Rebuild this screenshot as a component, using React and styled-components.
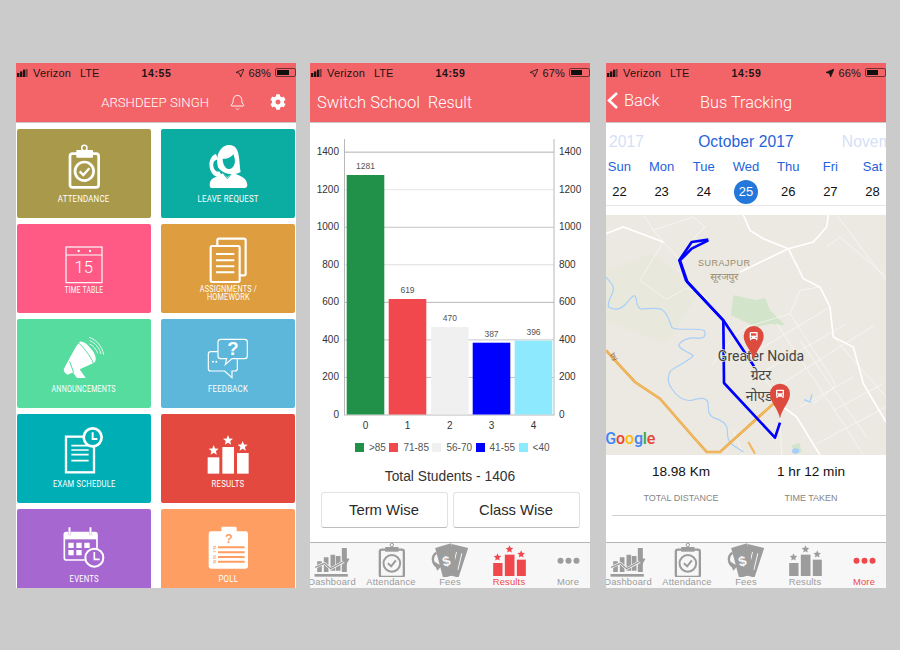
import React from 'react';
import styled, { createGlobalStyle } from 'styled-components';
import { Bell } from 'lucide-react';
import { FaCog } from 'react-icons/fa';

const HEADER = '#f36468';
const ACTIVE = '#f0474c';
const BLUE = '#2563d9';

const GlobalStyle = createGlobalStyle`
  html, body { margin: 0; background: #cbcbcb; }
  body { font-family: "Liberation Sans", Arial, sans-serif; }
`;

const Page = styled.div`
  width: 900px;
  height: 650px;
  box-sizing: border-box;
  padding: 63px 0 0 16px;
  display: flex;
  gap: 14px;
  overflow: hidden;
`;

const Phone = styled.div`
  width: 280px;
  height: 525px;
  margin-left: ${(p) => p.$shift || 0}px;
  background: #fff;
  display: flex;
  flex-direction: column;
  overflow: hidden;
`;

const TopBar = styled.div`
  flex: 0 0 59px;
  background: ${HEADER};
  border-bottom: 1px solid #c9c9c9;
  display: flex;
  flex-direction: column;
`;

const Status = styled.div`
  height: 19px;
  display: grid;
  grid-template-columns: 1fr auto 1fr;
  align-items: center;
  padding-left: 1px;
  font-size: 11px;
  color: #1d1416;
`;

const StatusLeft = styled.div`
  display: flex;
  align-items: center;
`;

const Carrier = styled.span`
  margin-left: 5px;
  width: 47px;
  letter-spacing: 0.2px;
`;

const StatusTime = styled.span`
  font-weight: bold;
  letter-spacing: 0.6px;
  font-size: 10.5px;
`;

const StatusRight = styled.div`
  display: flex;
  align-items: center;
  justify-content: flex-end;
  gap: 4px;
  letter-spacing: 0.2px;
`;

const Battery = styled.span`
  width: 21px;
  height: 9px;
  box-sizing: border-box;
  border: 1px solid #6d3033;
  border-radius: 2px;
  padding: 1px;
  display: flex;
  &::before {
    content: '';
    display: block;
    width: ${(p) => p.$level}%;
    background: #111;
  }
`;

const Nav = styled.div`
  flex: 1;
  display: flex;
  align-items: center;
  color: #fff;
  font-family: Roboto, "Liberation Sans", sans-serif;
  font-weight: 300;
`;

const HomeNav = styled(Nav)`
  justify-content: flex-end;
  padding-right: 10px;
  font-size: 13.2px;
`;

const NavName = styled.span`
  margin-right: 20px;
`;

const BellIcon = styled(Bell)`
  margin-right: 24px;
  stroke-width: 1.3;
`;

const TitleNav = styled(Nav)`
  padding-left: 7px;
  font-size: 16.6px;
`;

const SubTitle = styled.span`
  margin-left: 8px;
  font-size: 16px;
`;

const BackNav = styled(Nav)`
  position: relative;
  justify-content: center;
  font-size: 16.3px;
`;

const BackLink = styled.span`
  position: absolute;
  left: 1px;
  top: 9px;
  display: flex;
  align-items: center;
  gap: 6px;
  font-size: 16.5px;
`;

const Tiles = styled.div`
  flex: 1;
  display: grid;
  grid-template-columns: 134px 134px;
  grid-auto-rows: 89px;
  gap: 6px 10px;
  padding: 6px 1px 0;
  overflow: hidden;
`;

const Tile = styled.div`
  background: ${(p) => p.$color};
  border-radius: 2px;
  display: flex;
  flex-direction: column;
  align-items: center;
  color: #fff;
  --tile: ${(p) => p.$color};
`;

const TileIcon = styled.div`
  height: 60px;
  display: flex;
  align-items: flex-end;
`;

const TileLabel = styled.div`
  margin-top: ${(p) => p.$lift || 6}px;
  font-family: Roboto, sans-serif;
  font-size: 9px;
  line-height: 8px;
  height: 10px;
  text-align: center;
  letter-spacing: 0.25px;
  white-space: nowrap;
  transform: scaleX(${(p) => p.$squeeze || 0.87});
`;

const Tabs = styled.div`
  flex: 0 0 45px;
  background: #f7f7f7;
  border-top: 1px solid #b4b4b4;
  display: flex;
  justify-content: center;
`;

const Tab = styled.div`
  flex: 0 0 59px;
  display: flex;
  flex-direction: column;
  align-items: center;
  color: ${(p) => (p.$active ? ACTIVE : '#9c9c9c')};
  svg { display: block; }
`;

const TabLabel = styled.span`
  font-size: 9.4px;
  line-height: 10px;
  letter-spacing: 0.2px;
`;

const ChartWrap = styled.svg`
  display: block;
  margin-top: 16px;
  flex: 0 0 auto;
`;

const Legend = styled.div`
  display: flex;
  align-items: center;
  justify-content: center;
  height: 12px;
  margin: 6px 0 0 8px;
  font-size: 10px;
  color: #555;
`;

const LegendItem = styled.span`
  display: flex;
  align-items: center;
  margin-right: 3.5px;
  &::before {
    content: '';
    width: 9px;
    height: 9px;
    margin-right: 5px;
    background: ${(p) => p.$color};
  }
`;

const Total = styled.div`
  margin-top: 15px;
  text-align: center;
  font-size: 13.8px;
  line-height: 18px;
  color: #333;
`;

const ButtonRow = styled.div`
  display: flex;
  justify-content: center;
  gap: 5px;
  margin-top: 6px;
`;

const WiseButton = styled.div`
  width: 127px;
  height: 36px;
  box-sizing: border-box;
  border: 1px solid #e2e2e2;
  border-bottom-color: #bdbdbd;
  border-radius: 3px;
  display: flex;
  align-items: center;
  justify-content: center;
  font-size: 14.8px;
  color: #2a2a2a;
`;

const Spacer = styled.div`
  flex: 1;
`;

const Months = styled.div`
  height: 34px;
  padding-top: 3px;
  margin: 0 -1px;
  box-sizing: border-box;
  display: grid;
  grid-template-columns: minmax(0, 1fr) auto minmax(0, 1fr);
  align-items: center;
  font-size: 15.6px;
  letter-spacing: 0.1px;
  white-space: nowrap;
  color: #d5e0f8;
`;

const MonthSide = styled.div`
  display: flex;
  justify-content: ${(p) => (p.$left ? 'flex-end' : 'flex-start')};
  margin: ${(p) => (p.$left ? '0 54px 0 0' : '0 0 0 48px')};
  overflow: hidden;
`;

const MonthLabel = styled.span`
  flex-shrink: 0;
`;

const MonthCurrent = styled.span`
  color: ${BLUE};
`;

const Week = styled.div`
  display: flex;
  justify-content: center;
  overflow: hidden;
`;

const Cell = styled.div`
  flex: 0 0 42.2px;
  display: flex;
  justify-content: center;
  align-items: center;
`;

const DayNames = styled(Week)`
  height: 18px;
  font-size: 13px;
  color: ${BLUE};
`;

const Dates = styled(Week)`
  height: 27px;
  margin-top: 3px;
  border-bottom: 1px solid #e6e6e6;
  font-size: 13px;
  color: #111;
`;

const DateNum = styled.span`
  width: 24px;
  height: 24px;
  border-radius: 50%;
  display: flex;
  align-items: center;
  justify-content: center;
  background: ${(p) => (p.$today ? '#2478dc' : 'transparent')};
  color: ${(p) => (p.$today ? '#fff' : 'inherit')};
`;

const MapBox = styled.svg`
  display: block;
  margin-top: 9px;
  flex: 0 0 auto;
`;

const Stats = styled.div`
  display: grid;
  grid-template-columns: 150px 110px;
  padding-top: 9px;
`;

const Stat = styled.div`
  text-align: center;
`;

const StatValue = styled.div`
  font-size: 13.6px;
  line-height: 16px;
  color: #111;
`;

const StatLabel = styled.div`
  margin-top: 12px;
  font-size: 9px;
  line-height: 12px;
  color: #858585;
`;

const Divider = styled.div`
  height: 1px;
  margin: 11px 0 0 6px;
  background: #d0d0d0;
`;

function Signal() {
  return (
    <svg width="11" height="8" viewBox="0 0 11 8">
      <rect x="0" y="4" width="2.4" height="4" fill="#1d1416" />
      <rect x="3" y="2.4" width="2.4" height="5.6" fill="#1d1416" />
      <rect x="6" y="0.6" width="2.4" height="7.4" fill="#1d1416" />
      <rect x="9" y="0" width="1.6" height="8" fill="#7c3a3c" />
    </svg>
  );
}

function StatusBar({ time, level, solid }) {
  return (
    <Status>
      <StatusLeft>
        <Signal />
        <Carrier>Verizon</Carrier>
        <span>LTE</span>
      </StatusLeft>
      <StatusTime>{time}</StatusTime>
      <StatusRight>
        <svg width="8" height="8" viewBox="0 0 8 8">
          <path
            d="M8 0 L0 3.4 L3.6 4.4 L4.6 8 Z"
            fill={solid ? '#1d1416' : 'none'}
            stroke="#1d1416"
            strokeWidth="0.8"
          />
        </svg>
        <span>{level}%</span>
        <Battery $level={level} />
      </StatusRight>
    </Status>
  );
}

// Tile icons use the zoomed coordinates of the artwork, so each viewBox is 3x its size
const Ic = ({ box, children }) => {
  const [, , w, h] = box.split(' ').map(Number);
  return (
    <svg width={w / 3} height={h / 3} viewBox={box}>
      {children}
    </svg>
  );
};

const star = (cx, cy, r) => {
  const pts = [];
  for (let i = 0; i < 10; i++) {
    const a = (Math.PI / 5) * i - Math.PI / 2;
    const rr = i % 2 ? r * 0.45 : r;
    pts.push(`${(cx + rr * Math.cos(a)).toFixed(1)},${(cy + rr * Math.sin(a)).toFixed(1)}`);
  }
  return pts.join(' ');
};

const AttendanceIcon = () => (
  <Ic box="172 254 98 134">
    <rect x="178" y="283" width="86" height="101" rx="8" fill="none" stroke="#fff" strokeWidth="8" />
    <rect x="197" y="272" width="50" height="23" rx="2" fill="#fff" />
    <circle cx="221" cy="266" r="8" fill="none" stroke="#fff" strokeWidth="4.5" />
    <circle cx="221" cy="336" r="28" fill="none" stroke="#fff" strokeWidth="8" />
    <path d="M207 336 L218 347 L236 327" fill="none" stroke="#fff" strokeWidth="7" />
  </Ic>
);

const LadyIcon = () => (
  <Ic box="592 252 122 134">
    <path
      d="M622 322 C612 276 636 255 656 255 C690 256 684 300 690 336 C668 348 638 344 622 322 Z"
      fill="#fff"
    />
    <path d="M636 296 C650 298 664 290 668 282 C674 298 676 312 664 324 C652 334 636 320 636 296 Z" fill="var(--tile)" />
    <path
      d="M597 374 C597 352 620 352 636 340 L650 352 L666 338 C690 348 710 354 710 376 C710 381 706 384 702 384 L604 384 C600 384 597 381 597 374 Z"
      fill="#fff"
    />
    <path
      d="M616 282 C596 288 590 318 604 340 C612 352 626 352 634 348 L626 334 C618 338 610 330 608 318 C606 306 612 300 622 298 Z"
      fill="#fff"
    />
    <path d="M640 344 L650 356 L662 342" fill="none" stroke="var(--tile)" strokeWidth="2.5" />
  </Ic>
);

const CalendarIcon = () => (
  <Ic box="162 548 114 114">
    <rect x="165" y="551" width="108" height="107" fill="none" stroke="#fff" strokeWidth="3.5" />
    <line x1="165" y1="575" x2="273" y2="575" stroke="#fff" strokeWidth="3" />
    <circle cx="203" cy="563" r="3.5" fill="#fff" />
    <circle cx="237" cy="563" r="3.5" fill="#fff" />
    <text x="218" y="629" textAnchor="middle" fontSize="50" fill="#fff" fontFamily="Roboto" fontWeight="300">
      15
    </text>
  </Ic>
);

const DocsIcon = () => (
  <Ic box="590 530 114 140">
    <rect x="615" y="535" width="85" height="110" rx="5" fill="none" stroke="#fff" strokeWidth="6.5" />
    <rect x="595" y="557" width="87" height="108" rx="5" fill="var(--tile)" stroke="#fff" strokeWidth="6.5" />
    <path d="M611 581 H666 M611 600 H666 M611 618 H666 M611 636 H666" stroke="#fff" strokeWidth="6" />
  </Ic>
);

const MegaphoneIcon = () => (
  <Ic box="158 46 126 130">
    <path d="M208 64 C196 76 190 92 178 112 L160 146 C160 154 166 160 172 162 L248 128 C262 124 258 100 240 82 C226 66 214 60 208 64 Z" fill="#fff" />
    <path d="M184 150 L200 172 L226 172 L204 140 Z" fill="#fff" />
    <path d="M178 122 L190 156 M204 66 C216 76 240 104 250 130" fill="none" stroke="var(--tile)" strokeWidth="3" />
    <path d="M236 50 C258 56 276 78 280 102 M238 60 C254 66 268 82 272 100 M238 70 C250 76 258 86 262 98" fill="none" stroke="#fff" strokeWidth="2.5" />
  </Ic>
);

const ChatIcon = () => (
  <Ic box="589 56 125 122">
    <path
      d="M630 60 H702 Q710 60 710 68 V110 Q710 118 702 118 H664 L644 136 L648 118 H630 Q622 118 622 110 V68 Q622 60 630 60 Z"
      fill="none"
      stroke="#fff"
      strokeWidth="3.5"
    />
    <path
      d="M622 97 H600 Q593 97 593 104 V148 Q593 155 600 155 H642 L664 175 L664 155 H672 Q680 155 680 148 V120"
      fill="none"
      stroke="#fff"
      strokeWidth="3.5"
    />
    <text x="667" y="108" textAnchor="middle" fontSize="56" fontWeight="bold" fill="#fff" fontFamily="Liberation Sans">
      ?
    </text>
    <circle cx="607" cy="127" r="3" fill="#fff" />
    <circle cx="617" cy="127" r="3" fill="#fff" />
  </Ic>
);

const ExamIcon = () => (
  <Ic box="168 322 118 140">
    <rect x="174" y="351" width="84" height="107" fill="none" stroke="#fff" strokeWidth="7" />
    <path d="M190 378 H242 M190 391 H242 M190 405 H242 M190 423 H242" stroke="#fff" strokeWidth="5" />
    <circle cx="254" cy="353" r="27" fill="var(--tile)" stroke="#fff" strokeWidth="8" />
    <path d="M254 338 V358 H268" fill="none" stroke="#fff" strokeWidth="6" />
  </Ic>
);

const ResultsIcon = () => (
  <Ic box="588 346 128 118">
    <rect x="590" y="413" width="35" height="49" fill="#fff" />
    <rect x="634" y="382" width="35" height="80" fill="#fff" />
    <rect x="678" y="400" width="35" height="62" fill="#fff" />
    <polygon points={star(608, 392, 16)} fill="#fff" />
    <polygon points={star(651, 362, 16)} fill="#fff" />
    <polygon points={star(695, 380, 16)} fill="#fff" />
  </Ic>
);

const EventsIcon = () => (
  <Ic box="158 620 128 128">
    <rect x="162" y="640" width="98" height="82" rx="6" fill="none" stroke="#fff" strokeWidth="5" />
    <rect x="162" y="640" width="98" height="20" fill="#fff" />
    <rect x="174" y="623" width="7" height="24" rx="3" fill="#fff" stroke="var(--tile)" strokeWidth="1" />
    <rect x="237" y="623" width="7" height="24" rx="3" fill="#fff" stroke="var(--tile)" strokeWidth="1" />
    <path d="M174 670 h16 v16 h-16 z M198 670 h16 v16 h-16 z M222 670 h16 v16 h-16 z M174 692 h16 v16 h-16 z M198 692 h16 v16 h-16 z" fill="#fff" />
    <circle cx="252" cy="715" r="27" fill="var(--tile)" stroke="#fff" strokeWidth="6" />
    <path d="M252 698 V720 H268" fill="none" stroke="#fff" strokeWidth="5" />
  </Ic>
);

const PollIcon = () => (
  <Ic box="590 618 122 130">
    <rect x="592" y="634" width="118" height="112" rx="7" fill="#fff" />
    <rect x="630" y="620" width="46" height="22" rx="4" fill="#fff" />
    <text x="653" y="669" textAnchor="middle" fontSize="38" fontWeight="bold" fill="var(--tile)" fontFamily="Liberation Sans">
      ?
    </text>
    <path d="M620 682 H700 M620 697 H700 M620 711 H700 M620 725 H700" stroke="var(--tile)" strokeWidth="6" />
    <path d="M605 679 h9 l-9 7 h9 M605 694 h9 M605 708 h9 l-9 7 h9 M605 722 h9 l-9 6 h9" fill="none" stroke="var(--tile)" strokeWidth="2" />
  </Ic>
);

const TILES = [
  { label: 'ATTENDANCE', color: '#a99a4b', icon: <AttendanceIcon /> },
  { label: 'LEAVE REQUEST', color: '#0bada3', icon: <LadyIcon /> },
  { label: 'TIME TABLE', color: '#fe5a85', icon: <CalendarIcon />, lift: 2, squeeze: 0.75 },
  { label: <>ASSIGNMENTS /<br />HOMEWORK</>, color: '#de9d3e', icon: <DocsIcon />, lift: 1, squeeze: 0.81 },
  { label: 'ANNOUNCEMENTS', color: '#57dca0', icon: <MegaphoneIcon />, squeeze: 0.79 },
  { label: 'FEEDBACK', color: '#5cb7da', icon: <ChatIcon /> },
  { label: 'EXAM SCHEDULE', color: '#00aeb5', icon: <ExamIcon />, squeeze: 0.84 },
  { label: 'RESULTS', color: '#e3493e', icon: <ResultsIcon /> },
  { label: 'EVENTS', color: '#a667d1', icon: <EventsIcon />, squeeze: 0.85 },
  { label: 'POLL', color: '#fe9e63', icon: <PollIcon /> },
];

// Tab icons: zoomed coordinates too, one 59x34 cell per tab
const TabIc = ({ cx, children }) => (
  <svg width="59" height="34" viewBox={`${cx - 88.5} 653 177 102`} fill="currentColor">
    {children}
  </svg>
);

const DashIcon = () => (
  <TabIc cx={82}>
    <path d="M36 708 h14 v32 h-14 z M56 696 h14 v44 h-14 z M76 688 h14 v48 h-14 z M110 668 h15 v72 h-15 z M92 692 h14 v44 h-14 z" />
    <path d="M30 726 L58 714 L76 730 L126 704" fill="none" stroke="#f7f7f7" strokeWidth="8" />
    <path d="M30 726 L58 714 L76 730 L124 704" fill="none" stroke="currentColor" strokeWidth="4" />
    <path d="M110 698 L133 700 L122 720 Z" />
    <rect x="28" y="746" width="100" height="8" />
  </TabIc>
);

const ClipIcon = () => (
  <TabIc cx={257}>
    <rect x="222" y="673" width="72" height="82" rx="6" fill="none" stroke="currentColor" strokeWidth="7" />
    <rect x="238" y="665" width="40" height="14" />
    <circle cx="258" cy="659" r="5" fill="none" stroke="currentColor" strokeWidth="3" />
    <circle cx="258" cy="714" r="25" fill="none" stroke="currentColor" strokeWidth="6" />
    <path d="M246 714 L256 723 L270 705" fill="none" stroke="currentColor" strokeWidth="6" />
  </TabIc>
);

const FeesIcon = () => (
  <TabIc cx={434}>
    <polygon points="438,656 487,668 458,757 428,748" />
    <path d="M452 680 L440 730 M468 684 L456 734" stroke="#f7f7f7" strokeWidth="3" />
    <polygon points="388,668 436,654 458,745 412,758" />
    <text x="422" y="722" textAnchor="middle" fontSize="42" fontWeight="bold" fill="#f7f7f7" fontFamily="Liberation Sans" transform="rotate(-14 422 708)">
      $
    </text>
    <path d="M392 682 C376 692 378 716 396 726" fill="none" stroke="currentColor" strokeWidth="7" />
    <path d="M384 708 L408 722 L394 736 Z" />
  </TabIc>
);

const ResultTabIcon = () => (
  <TabIc cx={611}>
    <rect x="562" y="713" width="28" height="39" />
    <rect x="597" y="688" width="29" height="64" />
    <rect x="633" y="703" width="27" height="49" />
    <polygon points={star(575, 696, 12)} />
    <polygon points={star(611, 672, 12)} />
    <polygon points={star(646, 687, 12)} />
  </TabIc>
);

const MoreIcon = () => (
  <TabIc cx={788}>
    <circle cx="764" cy="706" r="9" />
    <circle cx="788" cy="706" r="9" />
    <circle cx="812" cy="706" r="9" />
  </TabIc>
);

function TabBar({ active }) {
  const tabs = [
    ['Dashboard', <DashIcon />],
    ['Attendance', <ClipIcon />],
    ['Fees', <FeesIcon />],
    ['Results', <ResultTabIcon />],
    ['More', <MoreIcon />],
  ];
  return (
    <Tabs>
      {tabs.map(([name, icon]) => (
        <Tab key={name} $active={name === active}>
          {icon}
          <TabLabel>{name}</TabLabel>
        </Tab>
      ))}
    </Tabs>
  );
}

const BARS = [
  { v: 1281, top: 36, x: 36.7, color: '#219049' },
  { v: 619, top: 160, x: 78.7, color: '#f0484c' },
  { v: 470, top: 188, x: 121, color: '#f0f0f0' },
  { v: 387, top: 203.7, x: 162.7, color: '#0000ff' },
  { v: 396, top: 201.7, x: 204.7, color: '#8de9fe' },
];
const GRID = ['#b0b0b0', '#e4e4e4', '#c4c4c4', '#dcdcdc', '#b8b8b8', '#c8c8c8', '#c0c0c0'];
const TICKS = [1400, 1200, 1000, 800, 600, 400, 200, 0];
const tickY = (t) => 276 - (t / 200) * 37.55;

function Chart() {
  const tickText = { fontSize: 10, fill: '#333', dominantBaseline: 'central' };
  return (
    <ChartWrap width="280" height="296" viewBox="0 0 280 296">
      {GRID.map((c, i) => (
        <line key={i} x1="34.5" x2="244" y1={tickY(TICKS[i])} y2={tickY(TICKS[i])} stroke={c} strokeWidth="1" />
      ))}
      <line x1="34.5" x2="34.5" y1="0" y2="276" stroke="#b8b8b8" />
      <line x1="244" x2="244" y1="0" y2="276" stroke="#b8b8b8" />
      <line x1="34" x2="244.5" y1="276" y2="276" stroke="#b8b8b8" strokeWidth="1.2" />
      {TICKS.map((t) => (
        <g key={t}>
          <text x="29" y={tickY(t) - 0.5} textAnchor="end" {...tickText}>{t}</text>
          <text x="249" y={tickY(t) - 0.5} {...tickText}>{t}</text>
        </g>
      ))}
      {BARS.map((b, i) => (
        <g key={i}>
          <rect x={b.x} y={b.top} width="37.6" height={275.5 - b.top} fill={b.color} />
          <text x={b.x + 18.8} y={b.top - 9} textAnchor="middle" fontSize="8.5" fill="#555" dominantBaseline="central">{b.v}</text>
          <text x={b.x + 18.8} y="286" textAnchor="middle" {...tickText}>{i}</text>
        </g>
      ))}
    </ChartWrap>
  );
}

const LEGEND = [
  ['#219049', '>85'],
  ['#f0484c', '71-85'],
  ['#f0f0f0', '56-70'],
  ['#0000ff', '41-55'],
  ['#8de9fe', '<40'],
];

const ROADS_MAIN = [
  'M430 14 L450 60 L490 85 L565 115 L610 205 L660 230 L690 290 L700 380 L760 410 L790 520 L858 635',
  'M18 70 L70 50 L190 95',
  'M420 185 L565 115 L640 95 L680 50 L685 14',
  'M550 590 L590 620 L660 734',
];
const ROADS_THIN = [
  'M130 14 L160 60 L190 95 L240 150 M160 60 L280 20 L315 50 L270 95',
  'M190 95 L120 210 L200 268 L255 235 L300 240 L350 310',
  'M335 465 L400 380 L440 350 L570 310 L600 240 L660 230',
  'M440 440 L690 290 M480 490 L740 340 M545 520 L822 345 M600 590 L760 500 M700 600 L850 520 M650 700 L858 590',
  'M570 310 L700 510 L705 530 L640 580 M530 340 L730 640 L790 734 M600 390 L800 680 M440 440 L560 590 M700 380 L858 560',
  'M710 14 L858 210 M680 110 L720 80 L860 200',
  'M540 620 L545 734 M400 660 L430 734',
];
const RIVER =
  'M18 200 C26 212 44 222 40 240 C36 256 20 276 26 290 C44 300 62 296 74 284 C86 272 100 250 106 258 C112 270 108 290 122 296 C146 296 170 290 186 298 C204 308 206 330 216 352 C240 362 290 352 312 360 C320 372 314 384 296 384 C276 380 250 384 236 404 C240 420 270 426 280 436 C262 456 222 470 210 484 C202 500 204 520 216 536 C230 556 250 574 274 570 C300 562 318 560 324 576 C326 596 322 612 340 622 C362 628 378 636 382 656 C382 680 384 694 398 704 L430 725';
const HIGHWAY = 'M18 420 L45 450 L105 515 L180 565 L280 680 L320 725 L360 725 L520 580';
const ROUTE_A = 'M325 88 L275 95 L238 150 L258 210 L370 330 L372 518 L525 682 L540 637';
const ROUTE_B = 'M325 90 L275 115 L240 150 L262 215 L370 330 L462 468';

const Pin = ({ x, y }) => (
  <g>
    <path
      d={`M${x} ${y + 93} C${x - 5} ${y + 62} ${x - 30} ${y + 44} ${x - 30} ${y + 18} A30 30 0 1 1 ${x + 30} ${y + 18} C${x + 30} ${y + 44} ${x + 5} ${y + 62} ${x} ${y + 93} Z`}
      fill="#dd4b3e"
    />
    <rect x={x - 12} y={y + 6} width="24" height="21" rx="3" fill="#fff" />
    <rect x={x - 8} y={y + 10} width="16" height="7" fill="#dd4b3e" />
    <circle cx={x - 7} cy={y + 22} r="2" fill="#dd4b3e" />
    <circle cx={x + 7} cy={y + 22} r="2" fill="#dd4b3e" />
    <path d={`M${x - 9} ${y + 27} v4 M${x + 9} ${y + 27} v4`} stroke="#fff" strokeWidth="4" />
  </g>
);

const HALO = { stroke: '#ebe9e1', strokeWidth: 4, paintOrder: 'stroke' };
const DEVA = '"Noto Sans Devanagari", "Noto Sans", "DejaVu Sans", sans-serif';

function BusMap() {
  const google = [['G', '#4285f4'], ['o', '#ea4335'], ['o', '#fbbc05'], ['g', '#4285f4'], ['l', '#34a853'], ['e', '#ea4335']];
  return (
    <MapBox width="280" height="240" viewBox="18 14 840 720">
      <rect x="18" y="14" width="840" height="720" fill="#ebe9e1" />
      <polygon points="18,180 160,130 300,240 200,400 18,330" fill="#e8e8dc" />
      <polygon points="400,255 470,270 495,262 510,300 555,345 510,340 470,350 393,315" fill="#d2e4ca" />
      <polygon points="575,705 598,697 605,725 585,732" fill="#d2e4ca" />
      <g opacity="0.75">
        {ROADS_THIN.map((d, i) => (
          <path key={i} d={d} fill="none" stroke="#fff" strokeWidth="2.2" />
        ))}
      </g>
      {ROADS_MAIN.map((d, i) => (
        <path key={i} d={d} fill="none" stroke="#fff" strokeWidth="5" />
      ))}
      <path d={RIVER} fill="none" stroke="#a8cff8" strokeWidth="3.5" />
      <path d="M612 568 L630 575 L636 552" fill="none" stroke="#a8cff8" strokeWidth="4" />
      <ellipse cx="587" cy="722" rx="11" ry="8" fill="#a8cff8" />
      <path d={HIGHWAY} fill="none" stroke="#eba945" strokeWidth="8" />
      <path d={HIGHWAY} fill="none" stroke="#f6c67e" strokeWidth="2.5" />
      <path d="M445 695 L465 730" stroke="#f1b55d" strokeWidth="6" />
      <text x="30" y="435" fontSize="22" fill="#8d6a45" transform="rotate(50 30 435)">by</text>
      <text x="373" y="166" textAnchor="middle" fontSize="27" letterSpacing="1.5" fill="#9a8a6c" fontFamily="Liberation Sans" {...HALO}>SURAJPUR</text>
      <text x="373" y="208" textAnchor="middle" fontSize="30" fill="#9a8a6c" fontFamily={DEVA} {...HALO}>सूरजपुर</text>
      <path d={ROUTE_B} fill="none" stroke="#0000ff" strokeWidth="8" strokeLinejoin="round" />
      <path d={ROUTE_A} fill="none" stroke="#0000ff" strokeWidth="8" strokeLinejoin="round" />
      <text x="483" y="452" textAnchor="middle" fontSize="42" fill="#444" fontFamily="Roboto" {...HALO}>Greater Noida</text>
      <text x="483" y="510" textAnchor="middle" fontSize="42" fill="#444" fontFamily={DEVA} {...HALO}>ग्रेटर</text>
      <text x="483" y="572" textAnchor="middle" fontSize="42" fill="#444" fontFamily={DEVA} {...HALO}>नोएडा</text>
      <Pin x={461} y={359} />
      <Pin x={540} y={532} />
      <text x="16" y="702" fontSize="48" fontFamily="Roboto" fontWeight="500" letterSpacing="-0.5">
        {google.map(([c, f], i) => (
          <tspan key={i} fill={f}>{c}</tspan>
        ))}
      </text>
    </MapBox>
  );
}

const DAYS = ['Sun', 'Mon', 'Tue', 'Wed', 'Thu', 'Fri', 'Sat'];
const DATES = [22, 23, 24, 25, 26, 27, 28];

const App = () => (
  <Page>
    <GlobalStyle />
    <Phone>
      <TopBar>
        <StatusBar time="14:55" level={68} />
        <HomeNav>
          <NavName>ARSHDEEP SINGH</NavName>
          <BellIcon size={17} />
          <FaCog size={16} />
        </HomeNav>
      </TopBar>
      <Tiles>
        {TILES.map((t, i) => (
          <Tile key={i} $color={t.color}>
            <TileIcon>{t.icon}</TileIcon>
            <TileLabel $lift={t.lift} $squeeze={t.squeeze}>{t.label}</TileLabel>
          </Tile>
        ))}
      </Tiles>
    </Phone>

    <Phone>
      <TopBar>
        <StatusBar time="14:59" level={67} />
        <TitleNav>
          Switch School<SubTitle>Result</SubTitle>
        </TitleNav>
      </TopBar>
      <Chart />
      <Legend>
        {LEGEND.map(([c, l]) => (
          <LegendItem key={l} $color={c}>{l}</LegendItem>
        ))}
      </Legend>
      <Total>Total Students - 1406</Total>
      <ButtonRow>
        <WiseButton>Term Wise</WiseButton>
        <WiseButton>Class Wise</WiseButton>
      </ButtonRow>
      <Spacer />
      <TabBar active="Results" />
    </Phone>

    <Phone $shift={2}>
      <TopBar>
        <StatusBar time="14:59" level={66} solid />
        <BackNav>
          <BackLink>
            <svg width="11" height="17" viewBox="0 0 11 17">
              <path d="M10 1 L2 8.5 L10 16" fill="none" stroke="#fff" strokeWidth="2.6" />
            </svg>
            Back
          </BackLink>
          Bus Tracking
        </BackNav>
      </TopBar>
      <Months>
        <MonthSide $left>
          <MonthLabel>September 2017</MonthLabel>
        </MonthSide>
        <MonthCurrent>October 2017</MonthCurrent>
        <MonthSide>
          <MonthLabel>November 2017</MonthLabel>
        </MonthSide>
      </Months>
      <DayNames>
        {DAYS.map((d) => (
          <Cell key={d}>{d}</Cell>
        ))}
      </DayNames>
      <Dates>
        {DATES.map((d) => (
          <Cell key={d}>
            <DateNum $today={d === 25}>{d}</DateNum>
          </Cell>
        ))}
      </Dates>
      <BusMap />
      <Stats>
        <Stat>
          <StatValue>18.98 Km</StatValue>
          <StatLabel>TOTAL DISTANCE</StatLabel>
        </Stat>
        <Stat>
          <StatValue>1 hr 12 min</StatValue>
          <StatLabel>TIME TAKEN</StatLabel>
        </Stat>
      </Stats>
      <Divider />
      <Spacer />
      <TabBar active="More" />
    </Phone>
  </Page>
);

export default App;
